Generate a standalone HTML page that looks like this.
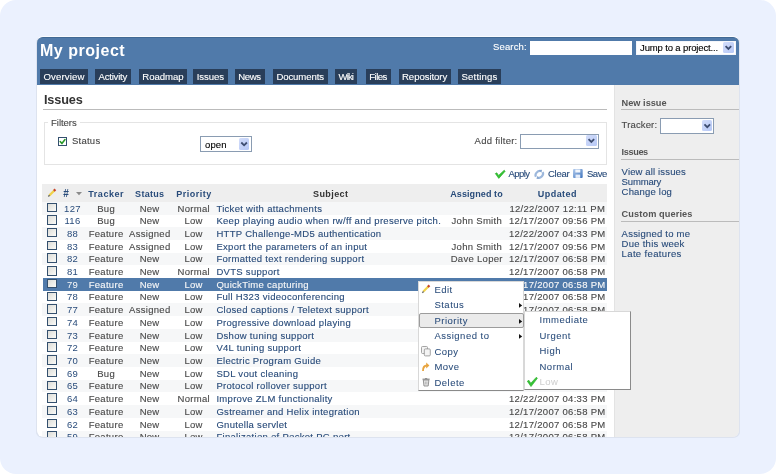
<!DOCTYPE html>
<html><head><meta charset="utf-8"><style>
html,body{margin:0;padding:0;width:776px;height:474px;overflow:hidden;background:#fff;font-family:"Liberation Sans", sans-serif;}
#root{position:absolute;left:0;top:0;width:776px;height:474px;will-change:transform}
#root .n{-webkit-text-stroke:0.12px}
</style></head><body>
<div id="root">
<div style="position:absolute;left:0;top:0;width:776px;height:474px;background:#ebf1fe;border-radius:16px"></div>
<div style="position:absolute;left:36px;top:36px;width:704px;height:402px;box-sizing:border-box;border:1px solid #dde3ef;border-top-color:#fafcff;border-radius:7px"></div>
<div style="position:absolute;left:37px;top:37px;width:702px;height:400px;background:#fff;border-radius:6px;overflow:hidden"></div>
<div style="position:absolute;left:614px;top:85px;width:125px;height:352px;background:#eeeeee;border-left:1px solid #e3e3e3;box-sizing:border-box;border-bottom-right-radius:6px"></div>
<div style="position:absolute;left:37px;top:37px;width:702px;height:48px;background:#507aaa;border-top:1px solid #416994;box-sizing:border-box;border-radius:6px 6px 0 0"></div>
<div style="position:absolute;left:40.00px;top:42.00px;white-space:pre;font-size:16px;line-height:17px;font-weight:bold;color:#fff;letter-spacing:0.512px;">My project</div>
<div class="n" style="position:absolute;left:493.00px;top:41.00px;white-space:pre;font-size:9.5px;line-height:11px;font-weight:normal;color:#fff;letter-spacing:0.150px;">Search:</div>
<div style="position:absolute;left:530px;top:41px;width:102px;height:14px;background:#fff"></div>
<div style="position:absolute;left:636px;top:40.8px;width:99.8px;height:14.2px;background:#fff;box-sizing:border-box;border:1px solid #f4f6fa"></div>
<div class="n" style="position:absolute;left:640.10px;top:42.00px;white-space:pre;font-size:9.5px;line-height:11px;font-weight:normal;color:#000;letter-spacing:-0.145px;">Jump to a project...</div>
<div style="position:absolute;left:40px;top:69.2px;width:48px;height:15.3px;background:#293e5a"></div>
<div class="n" style="position:absolute;left:43.50px;top:71.00px;white-space:pre;font-size:9.6px;line-height:11px;font-weight:normal;color:#fff;letter-spacing:0.135px;">Overview</div>
<div style="position:absolute;left:95px;top:69.2px;width:36px;height:15.3px;background:#293e5a"></div>
<div class="n" style="position:absolute;left:98.50px;top:71.00px;white-space:pre;font-size:9.6px;line-height:11px;font-weight:normal;color:#fff;letter-spacing:-0.227px;">Activity</div>
<div style="position:absolute;left:138.8px;top:69.2px;width:48.0px;height:15.3px;background:#293e5a"></div>
<div class="n" style="position:absolute;left:142.30px;top:71.00px;white-space:pre;font-size:9.6px;line-height:11px;font-weight:normal;color:#fff;letter-spacing:-0.044px;">Roadmap</div>
<div style="position:absolute;left:193.2px;top:69.2px;width:34.5px;height:15.3px;background:#293e5a"></div>
<div class="n" style="position:absolute;left:196.70px;top:71.00px;white-space:pre;font-size:9.6px;line-height:11px;font-weight:normal;color:#fff;letter-spacing:-0.086px;">Issues</div>
<div style="position:absolute;left:234.8px;top:69.2px;width:29.899999999999977px;height:15.3px;background:#293e5a"></div>
<div class="n" style="position:absolute;left:238.30px;top:71.00px;white-space:pre;font-size:9.6px;line-height:11px;font-weight:normal;color:#fff;letter-spacing:-0.431px;">News</div>
<div style="position:absolute;left:272.9px;top:69.2px;width:54.80000000000001px;height:15.3px;background:#293e5a"></div>
<div class="n" style="position:absolute;left:276.40px;top:71.00px;white-space:pre;font-size:9.6px;line-height:11px;font-weight:normal;color:#fff;letter-spacing:-0.116px;">Documents</div>
<div style="position:absolute;left:335px;top:69.2px;width:22.30000000000001px;height:15.3px;background:#293e5a"></div>
<div class="n" style="position:absolute;left:338.50px;top:71.00px;white-space:pre;font-size:9.6px;line-height:11px;font-weight:normal;color:#fff;letter-spacing:-0.894px;">Wiki</div>
<div style="position:absolute;left:365.7px;top:69.2px;width:25.400000000000034px;height:15.3px;background:#293e5a"></div>
<div class="n" style="position:absolute;left:369.20px;top:71.00px;white-space:pre;font-size:9.6px;line-height:11px;font-weight:normal;color:#fff;letter-spacing:-0.515px;">Files</div>
<div style="position:absolute;left:398.5px;top:69.2px;width:52.5px;height:15.3px;background:#293e5a"></div>
<div class="n" style="position:absolute;left:402.00px;top:71.00px;white-space:pre;font-size:9.6px;line-height:11px;font-weight:normal;color:#fff;letter-spacing:-0.062px;">Repository</div>
<div style="position:absolute;left:458px;top:69.2px;width:43px;height:15.3px;background:#293e5a"></div>
<div class="n" style="position:absolute;left:461.50px;top:71.00px;white-space:pre;font-size:9.6px;line-height:11px;font-weight:normal;color:#fff;letter-spacing:0.162px;">Settings</div>
<div style="position:absolute;left:43.90px;top:93.00px;white-space:pre;font-size:12.7px;line-height:14px;font-weight:bold;color:#333;letter-spacing:-0.129px;">Issues</div>
<div style="position:absolute;left:43px;top:109px;width:564px;height:1px;background:#bbb"></div>
<div style="position:absolute;left:43.5px;top:121.5px;width:563.5px;height:43px;box-sizing:border-box;border:1px solid #e4e4e4"></div>
<div style="position:absolute;left:48px;top:116px;width:32px;height:10px;background:#fff"></div>
<div class="n" style="position:absolute;left:51.00px;top:117.00px;white-space:pre;font-size:9.5px;line-height:11px;font-weight:normal;color:#484848;letter-spacing:-0.018px;">Filters</div>
<div style="position:absolute;left:58px;top:137px;width:9px;height:9px;box-sizing:border-box;border:1px solid #34506e;background:#fff"></div>
<div class="n" style="position:absolute;left:72.00px;top:135.00px;white-space:pre;font-size:9.5px;line-height:11px;font-weight:normal;color:#484848;letter-spacing:0.244px;">Status</div>
<div style="position:absolute;left:200.3px;top:136.1px;width:51.3px;height:15.5px;background:#fff;box-sizing:border-box;border:1px solid #8a9cb2"></div>
<div class="n" style="position:absolute;left:205.00px;top:139.00px;white-space:pre;font-size:9.5px;line-height:11px;font-weight:normal;color:#000;letter-spacing:0.150px;">open</div>
<div class="n" style="position:absolute;left:474.60px;top:135.00px;white-space:pre;font-size:9.5px;line-height:11px;font-weight:normal;color:#484848;letter-spacing:0.251px;">Add filter:</div>
<div style="position:absolute;left:520px;top:133.7px;width:79px;height:15px;background:#fff;box-sizing:border-box;border:1px solid #8a9cb2"></div>
<div class="n" style="position:absolute;left:508.40px;top:168.00px;white-space:pre;font-size:9.5px;line-height:11px;font-weight:normal;color:#284b7a;letter-spacing:-0.528px;">Apply</div>
<div class="n" style="position:absolute;left:548.00px;top:168.00px;white-space:pre;font-size:9.5px;line-height:11px;font-weight:normal;color:#284b7a;letter-spacing:-0.260px;">Clear</div>
<div class="n" style="position:absolute;left:587.00px;top:168.00px;white-space:pre;font-size:9.5px;line-height:11px;font-weight:normal;color:#284b7a;letter-spacing:-0.490px;">Save</div>
<div style="position:absolute;left:42px;top:184.1px;width:564.9px;height:17.5px;background:#eeeeee"></div>
<div style="position:absolute;left:63.30px;top:188.00px;white-space:pre;font-size:10px;line-height:11px;font-weight:bold;color:#284b7a;letter-spacing:0.000px;">#</div>
<div style="position:absolute;left:88.30px;top:189.00px;white-space:pre;font-size:9px;line-height:10px;font-weight:bold;color:#284b7a;letter-spacing:0.529px;">Tracker</div>
<div style="position:absolute;left:135.10px;top:189.00px;white-space:pre;font-size:9px;line-height:10px;font-weight:bold;color:#284b7a;letter-spacing:0.300px;">Status</div>
<div style="position:absolute;left:176.20px;top:189.00px;white-space:pre;font-size:9px;line-height:10px;font-weight:bold;color:#284b7a;letter-spacing:0.500px;">Priority</div>
<div style="position:absolute;left:313.00px;top:189.00px;white-space:pre;font-size:9px;line-height:10px;font-weight:bold;color:#333;letter-spacing:0.415px;">Subject</div>
<div style="position:absolute;left:450.20px;top:189.00px;white-space:pre;font-size:9px;line-height:10px;font-weight:bold;color:#284b7a;letter-spacing:0.099px;">Assigned to</div>
<div style="position:absolute;left:537.80px;top:189.00px;white-space:pre;font-size:9px;line-height:10px;font-weight:bold;color:#284b7a;letter-spacing:0.450px;">Updated</div>
<div style="position:absolute;left:42px;top:201.8px;width:564.9px;height:12.71px;background:#f6f7f8"></div>
<div style="position:absolute;left:47px;top:202.60000000000002px;width:9.8px;height:9.4px;box-sizing:border-box;border:1px solid #34506e;background:linear-gradient(135deg,#dcdcd7,#fbfbf8)"></div>
<div class="n" style="position:absolute;left:64.12px;top:203.00px;white-space:pre;font-size:9.5px;line-height:11px;font-weight:normal;color:#284b7a;letter-spacing:0.300px;-webkit-text-stroke:0">127</div>
<div class="n" style="position:absolute;left:97.19px;top:203.00px;white-space:pre;font-size:9.5px;line-height:11px;font-weight:normal;color:#484848;letter-spacing:0.300px;">Bug</div>
<div class="n" style="position:absolute;left:139.63px;top:203.00px;white-space:pre;font-size:9.5px;line-height:11px;font-weight:normal;color:#484848;letter-spacing:0.300px;">New</div>
<div class="n" style="position:absolute;left:177.50px;top:203.00px;white-space:pre;font-size:9.5px;line-height:11px;font-weight:normal;color:#484848;letter-spacing:0.300px;">Normal</div>
<div class="n" style="position:absolute;left:216.40px;top:203.00px;white-space:pre;font-size:9.5px;line-height:11px;font-weight:normal;color:#284b7a;letter-spacing:0.300px;">Ticket with attachments</div>
<div class="n" style="position:absolute;left:509.39px;top:203.00px;white-space:pre;font-size:9.5px;line-height:11px;font-weight:normal;color:#484848;letter-spacing:0.300px;">12/22/2007 12:11 PM</div>
<div style="position:absolute;left:42px;top:214.51000000000002px;width:564.9px;height:12.71px;background:#fff"></div>
<div style="position:absolute;left:47px;top:215.31000000000003px;width:9.8px;height:9.4px;box-sizing:border-box;border:1px solid #34506e;background:linear-gradient(135deg,#dcdcd7,#fbfbf8)"></div>
<div class="n" style="position:absolute;left:64.47px;top:215.00px;white-space:pre;font-size:9.5px;line-height:11px;font-weight:normal;color:#284b7a;letter-spacing:0.300px;-webkit-text-stroke:0">116</div>
<div class="n" style="position:absolute;left:97.19px;top:215.00px;white-space:pre;font-size:9.5px;line-height:11px;font-weight:normal;color:#484848;letter-spacing:0.300px;">Bug</div>
<div class="n" style="position:absolute;left:139.63px;top:215.00px;white-space:pre;font-size:9.5px;line-height:11px;font-weight:normal;color:#484848;letter-spacing:0.300px;">New</div>
<div class="n" style="position:absolute;left:184.42px;top:215.00px;white-space:pre;font-size:9.5px;line-height:11px;font-weight:normal;color:#484848;letter-spacing:0.300px;">Low</div>
<div class="n" style="position:absolute;left:216.40px;top:215.00px;white-space:pre;font-size:9.5px;line-height:11px;font-weight:normal;color:#284b7a;letter-spacing:0.300px;">Keep playing audio when rw/ff and preserve pitch.</div>
<div class="n" style="position:absolute;left:451.53px;top:215.00px;white-space:pre;font-size:9.5px;line-height:11px;font-weight:normal;color:#484848;letter-spacing:0.300px;">John Smith</div>
<div class="n" style="position:absolute;left:509.03px;top:215.00px;white-space:pre;font-size:9.5px;line-height:11px;font-weight:normal;color:#484848;letter-spacing:0.300px;">12/17/2007 09:56 PM</div>
<div style="position:absolute;left:42px;top:227.22000000000003px;width:564.9px;height:12.71px;background:#f6f7f8"></div>
<div style="position:absolute;left:47px;top:228.02000000000004px;width:9.8px;height:9.4px;box-sizing:border-box;border:1px solid #34506e;background:linear-gradient(135deg,#dcdcd7,#fbfbf8)"></div>
<div class="n" style="position:absolute;left:66.91px;top:228.00px;white-space:pre;font-size:9.5px;line-height:11px;font-weight:normal;color:#284b7a;letter-spacing:0.300px;-webkit-text-stroke:0">88</div>
<div class="n" style="position:absolute;left:88.67px;top:228.00px;white-space:pre;font-size:9.5px;line-height:11px;font-weight:normal;color:#484848;letter-spacing:0.300px;">Feature</div>
<div class="n" style="position:absolute;left:129.05px;top:228.00px;white-space:pre;font-size:9.5px;line-height:11px;font-weight:normal;color:#484848;letter-spacing:0.300px;">Assigned</div>
<div class="n" style="position:absolute;left:184.42px;top:228.00px;white-space:pre;font-size:9.5px;line-height:11px;font-weight:normal;color:#484848;letter-spacing:0.300px;">Low</div>
<div class="n" style="position:absolute;left:216.40px;top:228.00px;white-space:pre;font-size:9.5px;line-height:11px;font-weight:normal;color:#284b7a;letter-spacing:0.300px;">HTTP Challenge-MD5 authentication</div>
<div class="n" style="position:absolute;left:509.03px;top:228.00px;white-space:pre;font-size:9.5px;line-height:11px;font-weight:normal;color:#484848;letter-spacing:0.300px;">12/22/2007 04:33 PM</div>
<div style="position:absolute;left:42px;top:239.93px;width:564.9px;height:12.71px;background:#fff"></div>
<div style="position:absolute;left:47px;top:240.73000000000002px;width:9.8px;height:9.4px;box-sizing:border-box;border:1px solid #34506e;background:linear-gradient(135deg,#dcdcd7,#fbfbf8)"></div>
<div class="n" style="position:absolute;left:66.91px;top:241.00px;white-space:pre;font-size:9.5px;line-height:11px;font-weight:normal;color:#284b7a;letter-spacing:0.300px;-webkit-text-stroke:0">83</div>
<div class="n" style="position:absolute;left:88.67px;top:241.00px;white-space:pre;font-size:9.5px;line-height:11px;font-weight:normal;color:#484848;letter-spacing:0.300px;">Feature</div>
<div class="n" style="position:absolute;left:129.05px;top:241.00px;white-space:pre;font-size:9.5px;line-height:11px;font-weight:normal;color:#484848;letter-spacing:0.300px;">Assigned</div>
<div class="n" style="position:absolute;left:184.42px;top:241.00px;white-space:pre;font-size:9.5px;line-height:11px;font-weight:normal;color:#484848;letter-spacing:0.300px;">Low</div>
<div class="n" style="position:absolute;left:216.40px;top:241.00px;white-space:pre;font-size:9.5px;line-height:11px;font-weight:normal;color:#284b7a;letter-spacing:0.300px;">Export the parameters of an input</div>
<div class="n" style="position:absolute;left:451.53px;top:241.00px;white-space:pre;font-size:9.5px;line-height:11px;font-weight:normal;color:#484848;letter-spacing:0.300px;">John Smith</div>
<div class="n" style="position:absolute;left:509.03px;top:241.00px;white-space:pre;font-size:9.5px;line-height:11px;font-weight:normal;color:#484848;letter-spacing:0.300px;">12/17/2007 09:56 PM</div>
<div style="position:absolute;left:42px;top:252.64000000000001px;width:564.9px;height:12.71px;background:#f6f7f8"></div>
<div style="position:absolute;left:47px;top:253.44000000000003px;width:9.8px;height:9.4px;box-sizing:border-box;border:1px solid #34506e;background:linear-gradient(135deg,#dcdcd7,#fbfbf8)"></div>
<div class="n" style="position:absolute;left:66.91px;top:253.00px;white-space:pre;font-size:9.5px;line-height:11px;font-weight:normal;color:#284b7a;letter-spacing:0.300px;-webkit-text-stroke:0">82</div>
<div class="n" style="position:absolute;left:88.67px;top:253.00px;white-space:pre;font-size:9.5px;line-height:11px;font-weight:normal;color:#484848;letter-spacing:0.300px;">Feature</div>
<div class="n" style="position:absolute;left:139.63px;top:253.00px;white-space:pre;font-size:9.5px;line-height:11px;font-weight:normal;color:#484848;letter-spacing:0.300px;">New</div>
<div class="n" style="position:absolute;left:184.42px;top:253.00px;white-space:pre;font-size:9.5px;line-height:11px;font-weight:normal;color:#484848;letter-spacing:0.300px;">Low</div>
<div class="n" style="position:absolute;left:216.40px;top:253.00px;white-space:pre;font-size:9.5px;line-height:11px;font-weight:normal;color:#284b7a;letter-spacing:0.300px;">Formatted text rendering support</div>
<div class="n" style="position:absolute;left:450.67px;top:253.00px;white-space:pre;font-size:9.5px;line-height:11px;font-weight:normal;color:#484848;letter-spacing:0.300px;">Dave Loper</div>
<div class="n" style="position:absolute;left:509.03px;top:253.00px;white-space:pre;font-size:9.5px;line-height:11px;font-weight:normal;color:#484848;letter-spacing:0.300px;">12/17/2007 06:58 PM</div>
<div style="position:absolute;left:42px;top:265.35px;width:564.9px;height:12.71px;background:#fff"></div>
<div style="position:absolute;left:47px;top:266.15000000000003px;width:9.8px;height:9.4px;box-sizing:border-box;border:1px solid #34506e;background:linear-gradient(135deg,#dcdcd7,#fbfbf8)"></div>
<div class="n" style="position:absolute;left:66.91px;top:266.00px;white-space:pre;font-size:9.5px;line-height:11px;font-weight:normal;color:#284b7a;letter-spacing:0.300px;-webkit-text-stroke:0">81</div>
<div class="n" style="position:absolute;left:88.67px;top:266.00px;white-space:pre;font-size:9.5px;line-height:11px;font-weight:normal;color:#484848;letter-spacing:0.300px;">Feature</div>
<div class="n" style="position:absolute;left:139.63px;top:266.00px;white-space:pre;font-size:9.5px;line-height:11px;font-weight:normal;color:#484848;letter-spacing:0.300px;">New</div>
<div class="n" style="position:absolute;left:177.50px;top:266.00px;white-space:pre;font-size:9.5px;line-height:11px;font-weight:normal;color:#484848;letter-spacing:0.300px;">Normal</div>
<div class="n" style="position:absolute;left:216.40px;top:266.00px;white-space:pre;font-size:9.5px;line-height:11px;font-weight:normal;color:#284b7a;letter-spacing:0.300px;">DVTS support</div>
<div class="n" style="position:absolute;left:509.03px;top:266.00px;white-space:pre;font-size:9.5px;line-height:11px;font-weight:normal;color:#484848;letter-spacing:0.300px;">12/17/2007 06:58 PM</div>
<div style="position:absolute;left:43px;top:278.06px;width:563.9px;height:12.71px;background:#507aaa"></div>
<div style="position:absolute;left:47px;top:278.86px;width:9.8px;height:9.4px;box-sizing:border-box;border:1px solid #34506e;background:linear-gradient(135deg,#dcdcd7,#fbfbf8)"></div>
<div class="n" style="position:absolute;left:66.91px;top:279.00px;white-space:pre;font-size:9.5px;line-height:11px;font-weight:normal;color:#f8f8f8;letter-spacing:0.300px;-webkit-text-stroke:0">79</div>
<div class="n" style="position:absolute;left:88.67px;top:279.00px;white-space:pre;font-size:9.5px;line-height:11px;font-weight:normal;color:#f8f8f8;letter-spacing:0.300px;">Feature</div>
<div class="n" style="position:absolute;left:139.63px;top:279.00px;white-space:pre;font-size:9.5px;line-height:11px;font-weight:normal;color:#f8f8f8;letter-spacing:0.300px;">New</div>
<div class="n" style="position:absolute;left:184.42px;top:279.00px;white-space:pre;font-size:9.5px;line-height:11px;font-weight:normal;color:#f8f8f8;letter-spacing:0.300px;">Low</div>
<div class="n" style="position:absolute;left:216.40px;top:279.00px;white-space:pre;font-size:9.5px;line-height:11px;font-weight:normal;color:#f8f8f8;letter-spacing:0.300px;">QuickTime capturing</div>
<div class="n" style="position:absolute;left:509.03px;top:279.00px;white-space:pre;font-size:9.5px;line-height:11px;font-weight:normal;color:#f8f8f8;letter-spacing:0.300px;">12/17/2007 06:58 PM</div>
<div style="position:absolute;left:42px;top:290.77px;width:564.9px;height:12.71px;background:#fff"></div>
<div style="position:absolute;left:47px;top:291.57px;width:9.8px;height:9.4px;box-sizing:border-box;border:1px solid #34506e;background:linear-gradient(135deg,#dcdcd7,#fbfbf8)"></div>
<div class="n" style="position:absolute;left:66.91px;top:291.00px;white-space:pre;font-size:9.5px;line-height:11px;font-weight:normal;color:#284b7a;letter-spacing:0.300px;-webkit-text-stroke:0">78</div>
<div class="n" style="position:absolute;left:88.67px;top:291.00px;white-space:pre;font-size:9.5px;line-height:11px;font-weight:normal;color:#484848;letter-spacing:0.300px;">Feature</div>
<div class="n" style="position:absolute;left:139.63px;top:291.00px;white-space:pre;font-size:9.5px;line-height:11px;font-weight:normal;color:#484848;letter-spacing:0.300px;">New</div>
<div class="n" style="position:absolute;left:184.42px;top:291.00px;white-space:pre;font-size:9.5px;line-height:11px;font-weight:normal;color:#484848;letter-spacing:0.300px;">Low</div>
<div class="n" style="position:absolute;left:216.40px;top:291.00px;white-space:pre;font-size:9.5px;line-height:11px;font-weight:normal;color:#284b7a;letter-spacing:0.300px;">Full H323 videoconferencing</div>
<div class="n" style="position:absolute;left:509.03px;top:291.00px;white-space:pre;font-size:9.5px;line-height:11px;font-weight:normal;color:#484848;letter-spacing:0.300px;">12/17/2007 06:58 PM</div>
<div style="position:absolute;left:42px;top:303.48px;width:564.9px;height:12.71px;background:#f6f7f8"></div>
<div style="position:absolute;left:47px;top:304.28000000000003px;width:9.8px;height:9.4px;box-sizing:border-box;border:1px solid #34506e;background:linear-gradient(135deg,#dcdcd7,#fbfbf8)"></div>
<div class="n" style="position:absolute;left:66.91px;top:304.00px;white-space:pre;font-size:9.5px;line-height:11px;font-weight:normal;color:#284b7a;letter-spacing:0.300px;-webkit-text-stroke:0">77</div>
<div class="n" style="position:absolute;left:88.67px;top:304.00px;white-space:pre;font-size:9.5px;line-height:11px;font-weight:normal;color:#484848;letter-spacing:0.300px;">Feature</div>
<div class="n" style="position:absolute;left:129.05px;top:304.00px;white-space:pre;font-size:9.5px;line-height:11px;font-weight:normal;color:#484848;letter-spacing:0.300px;">Assigned</div>
<div class="n" style="position:absolute;left:184.42px;top:304.00px;white-space:pre;font-size:9.5px;line-height:11px;font-weight:normal;color:#484848;letter-spacing:0.300px;">Low</div>
<div class="n" style="position:absolute;left:216.40px;top:304.00px;white-space:pre;font-size:9.5px;line-height:11px;font-weight:normal;color:#284b7a;letter-spacing:0.300px;">Closed captions / Teletext support</div>
<div class="n" style="position:absolute;left:509.03px;top:304.00px;white-space:pre;font-size:9.5px;line-height:11px;font-weight:normal;color:#484848;letter-spacing:0.300px;">12/17/2007 06:58 PM</div>
<div style="position:absolute;left:42px;top:316.19000000000005px;width:564.9px;height:12.71px;background:#fff"></div>
<div style="position:absolute;left:47px;top:316.99000000000007px;width:9.8px;height:9.4px;box-sizing:border-box;border:1px solid #34506e;background:linear-gradient(135deg,#dcdcd7,#fbfbf8)"></div>
<div class="n" style="position:absolute;left:66.91px;top:317.00px;white-space:pre;font-size:9.5px;line-height:11px;font-weight:normal;color:#284b7a;letter-spacing:0.300px;-webkit-text-stroke:0">74</div>
<div class="n" style="position:absolute;left:88.67px;top:317.00px;white-space:pre;font-size:9.5px;line-height:11px;font-weight:normal;color:#484848;letter-spacing:0.300px;">Feature</div>
<div class="n" style="position:absolute;left:139.63px;top:317.00px;white-space:pre;font-size:9.5px;line-height:11px;font-weight:normal;color:#484848;letter-spacing:0.300px;">New</div>
<div class="n" style="position:absolute;left:184.42px;top:317.00px;white-space:pre;font-size:9.5px;line-height:11px;font-weight:normal;color:#484848;letter-spacing:0.300px;">Low</div>
<div class="n" style="position:absolute;left:216.40px;top:317.00px;white-space:pre;font-size:9.5px;line-height:11px;font-weight:normal;color:#284b7a;letter-spacing:0.300px;">Progressive download playing</div>
<div class="n" style="position:absolute;left:509.03px;top:317.00px;white-space:pre;font-size:9.5px;line-height:11px;font-weight:normal;color:#484848;letter-spacing:0.300px;">12/17/2007 06:58 PM</div>
<div style="position:absolute;left:42px;top:328.90000000000003px;width:564.9px;height:12.71px;background:#f6f7f8"></div>
<div style="position:absolute;left:47px;top:329.70000000000005px;width:9.8px;height:9.4px;box-sizing:border-box;border:1px solid #34506e;background:linear-gradient(135deg,#dcdcd7,#fbfbf8)"></div>
<div class="n" style="position:absolute;left:66.91px;top:330.00px;white-space:pre;font-size:9.5px;line-height:11px;font-weight:normal;color:#284b7a;letter-spacing:0.300px;-webkit-text-stroke:0">73</div>
<div class="n" style="position:absolute;left:88.67px;top:330.00px;white-space:pre;font-size:9.5px;line-height:11px;font-weight:normal;color:#484848;letter-spacing:0.300px;">Feature</div>
<div class="n" style="position:absolute;left:139.63px;top:330.00px;white-space:pre;font-size:9.5px;line-height:11px;font-weight:normal;color:#484848;letter-spacing:0.300px;">New</div>
<div class="n" style="position:absolute;left:184.42px;top:330.00px;white-space:pre;font-size:9.5px;line-height:11px;font-weight:normal;color:#484848;letter-spacing:0.300px;">Low</div>
<div class="n" style="position:absolute;left:216.40px;top:330.00px;white-space:pre;font-size:9.5px;line-height:11px;font-weight:normal;color:#284b7a;letter-spacing:0.300px;">Dshow tuning support</div>
<div class="n" style="position:absolute;left:509.03px;top:330.00px;white-space:pre;font-size:9.5px;line-height:11px;font-weight:normal;color:#484848;letter-spacing:0.300px;">12/17/2007 06:58 PM</div>
<div style="position:absolute;left:42px;top:341.61px;width:564.9px;height:12.71px;background:#fff"></div>
<div style="position:absolute;left:47px;top:342.41px;width:9.8px;height:9.4px;box-sizing:border-box;border:1px solid #34506e;background:linear-gradient(135deg,#dcdcd7,#fbfbf8)"></div>
<div class="n" style="position:absolute;left:66.91px;top:342.00px;white-space:pre;font-size:9.5px;line-height:11px;font-weight:normal;color:#284b7a;letter-spacing:0.300px;-webkit-text-stroke:0">72</div>
<div class="n" style="position:absolute;left:88.67px;top:342.00px;white-space:pre;font-size:9.5px;line-height:11px;font-weight:normal;color:#484848;letter-spacing:0.300px;">Feature</div>
<div class="n" style="position:absolute;left:139.63px;top:342.00px;white-space:pre;font-size:9.5px;line-height:11px;font-weight:normal;color:#484848;letter-spacing:0.300px;">New</div>
<div class="n" style="position:absolute;left:184.42px;top:342.00px;white-space:pre;font-size:9.5px;line-height:11px;font-weight:normal;color:#484848;letter-spacing:0.300px;">Low</div>
<div class="n" style="position:absolute;left:216.40px;top:342.00px;white-space:pre;font-size:9.5px;line-height:11px;font-weight:normal;color:#284b7a;letter-spacing:0.300px;">V4L tuning support</div>
<div class="n" style="position:absolute;left:509.03px;top:342.00px;white-space:pre;font-size:9.5px;line-height:11px;font-weight:normal;color:#484848;letter-spacing:0.300px;">12/17/2007 06:58 PM</div>
<div style="position:absolute;left:42px;top:354.32000000000005px;width:564.9px;height:12.71px;background:#f6f7f8"></div>
<div style="position:absolute;left:47px;top:355.12000000000006px;width:9.8px;height:9.4px;box-sizing:border-box;border:1px solid #34506e;background:linear-gradient(135deg,#dcdcd7,#fbfbf8)"></div>
<div class="n" style="position:absolute;left:66.91px;top:355.00px;white-space:pre;font-size:9.5px;line-height:11px;font-weight:normal;color:#284b7a;letter-spacing:0.300px;-webkit-text-stroke:0">70</div>
<div class="n" style="position:absolute;left:88.67px;top:355.00px;white-space:pre;font-size:9.5px;line-height:11px;font-weight:normal;color:#484848;letter-spacing:0.300px;">Feature</div>
<div class="n" style="position:absolute;left:139.63px;top:355.00px;white-space:pre;font-size:9.5px;line-height:11px;font-weight:normal;color:#484848;letter-spacing:0.300px;">New</div>
<div class="n" style="position:absolute;left:184.42px;top:355.00px;white-space:pre;font-size:9.5px;line-height:11px;font-weight:normal;color:#484848;letter-spacing:0.300px;">Low</div>
<div class="n" style="position:absolute;left:216.40px;top:355.00px;white-space:pre;font-size:9.5px;line-height:11px;font-weight:normal;color:#284b7a;letter-spacing:0.300px;">Electric Program Guide</div>
<div class="n" style="position:absolute;left:509.03px;top:355.00px;white-space:pre;font-size:9.5px;line-height:11px;font-weight:normal;color:#484848;letter-spacing:0.300px;">12/17/2007 06:58 PM</div>
<div style="position:absolute;left:42px;top:367.03000000000003px;width:564.9px;height:12.71px;background:#fff"></div>
<div style="position:absolute;left:47px;top:367.83000000000004px;width:9.8px;height:9.4px;box-sizing:border-box;border:1px solid #34506e;background:linear-gradient(135deg,#dcdcd7,#fbfbf8)"></div>
<div class="n" style="position:absolute;left:66.91px;top:368.00px;white-space:pre;font-size:9.5px;line-height:11px;font-weight:normal;color:#284b7a;letter-spacing:0.300px;-webkit-text-stroke:0">69</div>
<div class="n" style="position:absolute;left:97.19px;top:368.00px;white-space:pre;font-size:9.5px;line-height:11px;font-weight:normal;color:#484848;letter-spacing:0.300px;">Bug</div>
<div class="n" style="position:absolute;left:139.63px;top:368.00px;white-space:pre;font-size:9.5px;line-height:11px;font-weight:normal;color:#484848;letter-spacing:0.300px;">New</div>
<div class="n" style="position:absolute;left:184.42px;top:368.00px;white-space:pre;font-size:9.5px;line-height:11px;font-weight:normal;color:#484848;letter-spacing:0.300px;">Low</div>
<div class="n" style="position:absolute;left:216.40px;top:368.00px;white-space:pre;font-size:9.5px;line-height:11px;font-weight:normal;color:#284b7a;letter-spacing:0.300px;">SDL vout cleaning</div>
<div class="n" style="position:absolute;left:509.03px;top:368.00px;white-space:pre;font-size:9.5px;line-height:11px;font-weight:normal;color:#484848;letter-spacing:0.300px;">12/17/2007 06:58 PM</div>
<div style="position:absolute;left:42px;top:379.74px;width:564.9px;height:12.71px;background:#f6f7f8"></div>
<div style="position:absolute;left:47px;top:380.54px;width:9.8px;height:9.4px;box-sizing:border-box;border:1px solid #34506e;background:linear-gradient(135deg,#dcdcd7,#fbfbf8)"></div>
<div class="n" style="position:absolute;left:66.91px;top:380.00px;white-space:pre;font-size:9.5px;line-height:11px;font-weight:normal;color:#284b7a;letter-spacing:0.300px;-webkit-text-stroke:0">65</div>
<div class="n" style="position:absolute;left:88.67px;top:380.00px;white-space:pre;font-size:9.5px;line-height:11px;font-weight:normal;color:#484848;letter-spacing:0.300px;">Feature</div>
<div class="n" style="position:absolute;left:139.63px;top:380.00px;white-space:pre;font-size:9.5px;line-height:11px;font-weight:normal;color:#484848;letter-spacing:0.300px;">New</div>
<div class="n" style="position:absolute;left:184.42px;top:380.00px;white-space:pre;font-size:9.5px;line-height:11px;font-weight:normal;color:#484848;letter-spacing:0.300px;">Low</div>
<div class="n" style="position:absolute;left:216.40px;top:380.00px;white-space:pre;font-size:9.5px;line-height:11px;font-weight:normal;color:#284b7a;letter-spacing:0.300px;">Protocol rollover support</div>
<div class="n" style="position:absolute;left:509.03px;top:380.00px;white-space:pre;font-size:9.5px;line-height:11px;font-weight:normal;color:#484848;letter-spacing:0.300px;">12/17/2007 06:58 PM</div>
<div style="position:absolute;left:42px;top:392.45000000000005px;width:564.9px;height:12.71px;background:#fff"></div>
<div style="position:absolute;left:47px;top:393.25000000000006px;width:9.8px;height:9.4px;box-sizing:border-box;border:1px solid #34506e;background:linear-gradient(135deg,#dcdcd7,#fbfbf8)"></div>
<div class="n" style="position:absolute;left:66.91px;top:393.00px;white-space:pre;font-size:9.5px;line-height:11px;font-weight:normal;color:#284b7a;letter-spacing:0.300px;-webkit-text-stroke:0">64</div>
<div class="n" style="position:absolute;left:88.67px;top:393.00px;white-space:pre;font-size:9.5px;line-height:11px;font-weight:normal;color:#484848;letter-spacing:0.300px;">Feature</div>
<div class="n" style="position:absolute;left:139.63px;top:393.00px;white-space:pre;font-size:9.5px;line-height:11px;font-weight:normal;color:#484848;letter-spacing:0.300px;">New</div>
<div class="n" style="position:absolute;left:177.50px;top:393.00px;white-space:pre;font-size:9.5px;line-height:11px;font-weight:normal;color:#484848;letter-spacing:0.300px;">Normal</div>
<div class="n" style="position:absolute;left:216.40px;top:393.00px;white-space:pre;font-size:9.5px;line-height:11px;font-weight:normal;color:#284b7a;letter-spacing:0.300px;">Improve ZLM functionality</div>
<div class="n" style="position:absolute;left:509.03px;top:393.00px;white-space:pre;font-size:9.5px;line-height:11px;font-weight:normal;color:#484848;letter-spacing:0.300px;">12/22/2007 04:33 PM</div>
<div style="position:absolute;left:42px;top:405.16px;width:564.9px;height:12.71px;background:#f6f7f8"></div>
<div style="position:absolute;left:47px;top:405.96000000000004px;width:9.8px;height:9.4px;box-sizing:border-box;border:1px solid #34506e;background:linear-gradient(135deg,#dcdcd7,#fbfbf8)"></div>
<div class="n" style="position:absolute;left:66.91px;top:406.00px;white-space:pre;font-size:9.5px;line-height:11px;font-weight:normal;color:#284b7a;letter-spacing:0.300px;-webkit-text-stroke:0">63</div>
<div class="n" style="position:absolute;left:88.67px;top:406.00px;white-space:pre;font-size:9.5px;line-height:11px;font-weight:normal;color:#484848;letter-spacing:0.300px;">Feature</div>
<div class="n" style="position:absolute;left:139.63px;top:406.00px;white-space:pre;font-size:9.5px;line-height:11px;font-weight:normal;color:#484848;letter-spacing:0.300px;">New</div>
<div class="n" style="position:absolute;left:184.42px;top:406.00px;white-space:pre;font-size:9.5px;line-height:11px;font-weight:normal;color:#484848;letter-spacing:0.300px;">Low</div>
<div class="n" style="position:absolute;left:216.40px;top:406.00px;white-space:pre;font-size:9.5px;line-height:11px;font-weight:normal;color:#284b7a;letter-spacing:0.300px;">Gstreamer and Helix integration</div>
<div class="n" style="position:absolute;left:509.03px;top:406.00px;white-space:pre;font-size:9.5px;line-height:11px;font-weight:normal;color:#484848;letter-spacing:0.300px;">12/17/2007 06:58 PM</div>
<div style="position:absolute;left:42px;top:417.87px;width:564.9px;height:12.71px;background:#fff"></div>
<div style="position:absolute;left:47px;top:418.67px;width:9.8px;height:9.4px;box-sizing:border-box;border:1px solid #34506e;background:linear-gradient(135deg,#dcdcd7,#fbfbf8)"></div>
<div class="n" style="position:absolute;left:66.91px;top:419.00px;white-space:pre;font-size:9.5px;line-height:11px;font-weight:normal;color:#284b7a;letter-spacing:0.300px;-webkit-text-stroke:0">62</div>
<div class="n" style="position:absolute;left:88.67px;top:419.00px;white-space:pre;font-size:9.5px;line-height:11px;font-weight:normal;color:#484848;letter-spacing:0.300px;">Feature</div>
<div class="n" style="position:absolute;left:139.63px;top:419.00px;white-space:pre;font-size:9.5px;line-height:11px;font-weight:normal;color:#484848;letter-spacing:0.300px;">New</div>
<div class="n" style="position:absolute;left:184.42px;top:419.00px;white-space:pre;font-size:9.5px;line-height:11px;font-weight:normal;color:#484848;letter-spacing:0.300px;">Low</div>
<div class="n" style="position:absolute;left:216.40px;top:419.00px;white-space:pre;font-size:9.5px;line-height:11px;font-weight:normal;color:#284b7a;letter-spacing:0.300px;">Gnutella servlet</div>
<div class="n" style="position:absolute;left:509.03px;top:419.00px;white-space:pre;font-size:9.5px;line-height:11px;font-weight:normal;color:#484848;letter-spacing:0.300px;">12/17/2007 06:58 PM</div>
<div style="position:absolute;left:42px;top:430.58000000000004px;width:564.9px;height:6.419999999999959px;background:#f6f7f8"></div>
<div style="position:absolute;left:47px;top:431.38000000000005px;width:9.8px;height:9.4px;box-sizing:border-box;border:1px solid #34506e;background:linear-gradient(135deg,#dcdcd7,#fbfbf8)"></div>
<div class="n" style="position:absolute;left:66.91px;top:431.00px;white-space:pre;font-size:9.5px;line-height:11px;font-weight:normal;color:#284b7a;letter-spacing:0.300px;-webkit-text-stroke:0">59</div>
<div class="n" style="position:absolute;left:88.67px;top:431.00px;white-space:pre;font-size:9.5px;line-height:11px;font-weight:normal;color:#484848;letter-spacing:0.300px;">Feature</div>
<div class="n" style="position:absolute;left:139.63px;top:431.00px;white-space:pre;font-size:9.5px;line-height:11px;font-weight:normal;color:#484848;letter-spacing:0.300px;">New</div>
<div class="n" style="position:absolute;left:184.42px;top:431.00px;white-space:pre;font-size:9.5px;line-height:11px;font-weight:normal;color:#484848;letter-spacing:0.300px;">Low</div>
<div class="n" style="position:absolute;left:216.40px;top:431.00px;white-space:pre;font-size:9.5px;line-height:11px;font-weight:normal;color:#284b7a;letter-spacing:0.300px;">Finalization of Pocket PC port</div>
<div class="n" style="position:absolute;left:509.03px;top:431.00px;white-space:pre;font-size:9.5px;line-height:11px;font-weight:normal;color:#484848;letter-spacing:0.300px;">12/17/2007 06:58 PM</div>
<div style="position:absolute;left:30px;top:437px;width:716px;height:12px;background:#ebf1fe"></div>
<div style="position:absolute;left:36px;top:425px;width:704px;height:13px;box-sizing:border-box;border:1px solid #dde3ef;border-top:none;border-radius:0 0 7px 7px"></div>
<div style="position:absolute;left:621.60px;top:98.00px;white-space:pre;font-size:9.2px;line-height:10px;font-weight:bold;color:#555;letter-spacing:0.009px;">New issue</div>
<div style="position:absolute;left:621px;top:109px;width:118px;height:1px;background:#bbb"></div>
<div class="n" style="position:absolute;left:621.60px;top:119.00px;white-space:pre;font-size:9.5px;line-height:11px;font-weight:normal;color:#484848;letter-spacing:0.137px;">Tracker:</div>
<div style="position:absolute;left:660px;top:118.2px;width:54.4px;height:15.4px;background:#fff;box-sizing:border-box;border:1px solid #8a9cb2"></div>
<div style="position:absolute;left:621.60px;top:147.00px;white-space:pre;font-size:9.2px;line-height:10px;font-weight:bold;color:#555;letter-spacing:-0.399px;">Issues</div>
<div style="position:absolute;left:621px;top:159px;width:118px;height:1px;background:#bbb"></div>
<div class="n" style="position:absolute;left:621.60px;top:166.00px;white-space:pre;font-size:9.5px;line-height:11px;font-weight:normal;color:#284b7a;letter-spacing:0.144px;">View all issues</div>
<div class="n" style="position:absolute;left:621.60px;top:176.00px;white-space:pre;font-size:9.5px;line-height:11px;font-weight:normal;color:#284b7a;letter-spacing:-0.149px;">Summary</div>
<div class="n" style="position:absolute;left:621.60px;top:186.00px;white-space:pre;font-size:9.5px;line-height:11px;font-weight:normal;color:#284b7a;letter-spacing:0.188px;">Change log</div>
<div style="position:absolute;left:621.60px;top:209.00px;white-space:pre;font-size:9.2px;line-height:10px;font-weight:bold;color:#555;letter-spacing:0.106px;">Custom queries</div>
<div style="position:absolute;left:621px;top:221.3px;width:118px;height:1px;background:#bbb"></div>
<div class="n" style="position:absolute;left:621.60px;top:228.00px;white-space:pre;font-size:9.5px;line-height:11px;font-weight:normal;color:#284b7a;letter-spacing:0.223px;">Assigned to me</div>
<div class="n" style="position:absolute;left:621.60px;top:238.00px;white-space:pre;font-size:9.5px;line-height:11px;font-weight:normal;color:#284b7a;letter-spacing:0.257px;">Due this week</div>
<div class="n" style="position:absolute;left:621.60px;top:248.00px;white-space:pre;font-size:9.5px;line-height:11px;font-weight:normal;color:#284b7a;letter-spacing:0.358px;">Late features</div>
<div style="position:absolute;left:418.2px;top:280.8px;width:106px;height:109.8px;background:#fff;box-sizing:border-box;border:1px solid #d8d8d8;border-bottom:1.2px solid #8a8a8a"></div>
<div style="position:absolute;left:419.3px;top:313.2px;width:104.5px;height:14.4px;background:#ebebeb;box-sizing:border-box;border:1px solid #9c9c9c;border-radius:2px"></div>
<div class="n" style="position:absolute;left:434.40px;top:284.00px;white-space:pre;font-size:9.5px;line-height:11px;font-weight:normal;color:#284b7a;letter-spacing:0.500px;-webkit-text-stroke:0.05px">Edit</div>
<div class="n" style="position:absolute;left:434.40px;top:299.00px;white-space:pre;font-size:9.5px;line-height:11px;font-weight:normal;color:#284b7a;letter-spacing:0.500px;-webkit-text-stroke:0.05px">Status</div>
<div class="n" style="position:absolute;left:434.40px;top:315.00px;white-space:pre;font-size:9.5px;line-height:11px;font-weight:normal;color:#284b7a;letter-spacing:0.500px;-webkit-text-stroke:0.05px">Priority</div>
<div class="n" style="position:absolute;left:434.40px;top:330.00px;white-space:pre;font-size:9.5px;line-height:11px;font-weight:normal;color:#284b7a;letter-spacing:0.500px;-webkit-text-stroke:0.05px">Assigned to</div>
<div class="n" style="position:absolute;left:434.40px;top:346.00px;white-space:pre;font-size:9.5px;line-height:11px;font-weight:normal;color:#284b7a;letter-spacing:0.500px;-webkit-text-stroke:0.05px">Copy</div>
<div class="n" style="position:absolute;left:434.40px;top:361.00px;white-space:pre;font-size:9.5px;line-height:11px;font-weight:normal;color:#284b7a;letter-spacing:0.500px;-webkit-text-stroke:0.05px">Move</div>
<div class="n" style="position:absolute;left:434.40px;top:377.00px;white-space:pre;font-size:9.5px;line-height:11px;font-weight:normal;color:#284b7a;letter-spacing:0.500px;-webkit-text-stroke:0.05px">Delete</div>
<div style="position:absolute;left:523.5px;top:311.2px;width:107.7px;height:79.1px;background:#fff;box-sizing:border-box;border:1px solid #d8d8d8;border-right-color:#8a8a8a;border-bottom:1.2px solid #8a8a8a"></div>
<div class="n" style="position:absolute;left:539.50px;top:314.00px;white-space:pre;font-size:9.5px;line-height:11px;font-weight:normal;color:#284b7a;letter-spacing:0.500px;-webkit-text-stroke:0.05px">Immediate</div>
<div class="n" style="position:absolute;left:539.50px;top:330.00px;white-space:pre;font-size:9.5px;line-height:11px;font-weight:normal;color:#284b7a;letter-spacing:0.500px;-webkit-text-stroke:0.05px">Urgent</div>
<div class="n" style="position:absolute;left:539.50px;top:345.00px;white-space:pre;font-size:9.5px;line-height:11px;font-weight:normal;color:#284b7a;letter-spacing:0.500px;-webkit-text-stroke:0.05px">High</div>
<div class="n" style="position:absolute;left:539.50px;top:361.00px;white-space:pre;font-size:9.5px;line-height:11px;font-weight:normal;color:#284b7a;letter-spacing:0.500px;-webkit-text-stroke:0.05px">Normal</div>
<div class="n" style="position:absolute;left:539.50px;top:376.00px;white-space:pre;font-size:9.5px;line-height:11px;font-weight:normal;color:#d0d0d0;letter-spacing:0.500px;-webkit-text-stroke:0.05px">Low</div>
<div style="position:absolute;left:722.9px;top:42.1px;width:10.8px;height:11.1px;background:linear-gradient(135deg,#d3ddfa,#b6c8f6);border-radius:1.5px"></div>
<svg style="position:absolute;left:722.9px;top:42.1px;overflow:visible" width="10.8" height="11.1" viewBox="0 0 10.8 11.1"><path d="M2.6000000000000005 4.15 L5.4 6.949999999999999 L8.2 4.15" fill="none" stroke="#3d4d70" stroke-width="1.8"/></svg>
<div style="position:absolute;left:238.8px;top:137.9px;width:10.2px;height:11.8px;background:linear-gradient(135deg,#d3ddfa,#b6c8f6);border-radius:1.5px"></div>
<svg style="position:absolute;left:238.8px;top:137.9px;overflow:visible" width="10.2" height="11.8" viewBox="0 0 10.2 11.8"><path d="M2.3 4.5 L5.1 7.300000000000001 L7.8999999999999995 4.5" fill="none" stroke="#3d4d70" stroke-width="1.8"/></svg>
<div style="position:absolute;left:586px;top:135.3px;width:10.7px;height:11.2px;background:linear-gradient(135deg,#d3ddfa,#b6c8f6);border-radius:1.5px"></div>
<svg style="position:absolute;left:586px;top:135.3px;overflow:visible" width="10.7" height="11.2" viewBox="0 0 10.7 11.2"><path d="M2.55 4.199999999999999 L5.35 7.0 L8.149999999999999 4.199999999999999" fill="none" stroke="#3d4d70" stroke-width="1.8"/></svg>
<div style="position:absolute;left:701.8px;top:119.9px;width:10.5px;height:11.6px;background:linear-gradient(135deg,#d3ddfa,#b6c8f6);border-radius:1.5px"></div>
<svg style="position:absolute;left:701.8px;top:119.9px;overflow:visible" width="10.5" height="11.6" viewBox="0 0 10.5 11.6"><path d="M2.45 4.4 L5.25 7.199999999999999 L8.05 4.4" fill="none" stroke="#3d4d70" stroke-width="1.8"/></svg>
<svg style="position:absolute;left:58px;top:137px;overflow:visible" width="9" height="9" viewBox="0 0 9 9"><path d="M2.2 4.6 L3.9 6.6 L7 2.6" fill="none" stroke="#2a9a2a" stroke-width="1.6" stroke-linecap="round" stroke-linejoin="round"/></svg>
<svg style="position:absolute;left:494.7px;top:169.8px;overflow:visible" width="10.4" height="8.5" viewBox="0 0 10.4 8.5"><path d="M0.3 3.6 L1.8 2.8 L3.6 5.4 L9.2 0.2 L10.2 1.2 L3.8 8.4 Z" fill="#35c435" stroke="#22aa22" stroke-width="0.6"/></svg>
<svg style="position:absolute;left:534.2px;top:169.8px;overflow:visible" width="10.6" height="8.8" viewBox="0 0 10.6 8.8"><g transform="rotate(-35 5.3 4.4)"><path d="M1.2 4.4 A4.1 3.3 0 0 1 8.6 2.6" fill="none" stroke="#9db8dc" stroke-width="2.2"/><path d="M9.4 4.4 A4.1 3.3 0 0 1 2 6.2" fill="none" stroke="#9db8dc" stroke-width="2.2"/><path d="M7.2 0.6 L10.2 2.2 L8 4.3 Z" fill="#86a6d0"/><path d="M3.4 8.2 L0.4 6.6 L2.6 4.5 Z" fill="#86a6d0"/></g></svg>
<svg style="position:absolute;left:573px;top:169.4px;overflow:visible" width="9.7" height="8.9" viewBox="0 0 9.7 8.9"><defs><linearGradient id="sg" x1="0" y1="0" x2="1" y2="1"><stop offset="0" stop-color="#b4cdee"/><stop offset="1" stop-color="#3f74bd"/></linearGradient></defs><rect x="0" y="0" width="9.7" height="8.9" rx="1" fill="url(#sg)"/><rect x="2.3" y="0.5" width="5" height="3" fill="#f2f6fc"/><rect x="2.5" y="5.6" width="4.7" height="3.3" fill="#e6eefa"/></svg>
<svg style="position:absolute;left:48.3px;top:189.1px;overflow:visible" width="8.2" height="7.7" viewBox="0 0 8.2 7.7"><path d="M1.4 6.4 L6.6 1.2" stroke="#f0d24a" stroke-width="2.2"/><path d="M5.9 1.9 L7.4 0.4" stroke="#c8442c" stroke-width="2.2"/><path d="M0.3 7.5 L1.6 6.2" stroke="#6a6a5a" stroke-width="1.4"/></svg>
<svg style="position:absolute;left:75.5px;top:192px;overflow:visible" width="6" height="3.2" viewBox="0 0 6 3.2"><path d="M0 0 L6 0 L3 3.2 Z" fill="#8a8a8a"/></svg>
<svg style="position:absolute;left:519.2px;top:303.2px;overflow:visible" width="3.2" height="4.8" viewBox="0 0 3.2 4.8"><path d="M0 0 L3.2 2.4 L0 4.8 Z" fill="#111"/></svg>
<svg style="position:absolute;left:519.2px;top:318.7px;overflow:visible" width="3.2" height="4.8" viewBox="0 0 3.2 4.8"><path d="M0 0 L3.2 2.4 L0 4.8 Z" fill="#111"/></svg>
<svg style="position:absolute;left:519.2px;top:333.9px;overflow:visible" width="3.2" height="4.8" viewBox="0 0 3.2 4.8"><path d="M0 0 L3.2 2.4 L0 4.8 Z" fill="#111"/></svg>
<svg style="position:absolute;left:421.8px;top:284.8px;overflow:visible" width="8.2" height="7.9" viewBox="0 0 8.2 7.9"><path d="M1.4 6.6 L6.6 1.3" stroke="#f0d24a" stroke-width="2.2"/><path d="M5.9 2 L7.5 0.4" stroke="#c8442c" stroke-width="2.2"/><path d="M0.3 7.7 L1.6 6.4" stroke="#6a6a5a" stroke-width="1.4"/></svg>
<svg style="position:absolute;left:421px;top:346px;overflow:visible" width="9.8" height="10.4" viewBox="0 0 9.8 10.4"><rect x="0.5" y="0.5" width="6" height="7" rx="1" fill="#f4f4f4" stroke="#9a9a9a" stroke-width="0.9"/><rect x="3.3" y="2.9" width="6" height="7" rx="1" fill="#f4f4f4" stroke="#9a9a9a" stroke-width="0.9"/></svg>
<svg style="position:absolute;left:422px;top:361.9px;overflow:visible" width="7.5" height="9.3" viewBox="0 0 7.5 9.3"><path d="M1 9 C1 5 2.5 3.5 5 3.5" fill="none" stroke="#e8a540" stroke-width="1.8"/><path d="M4.2 0.6 L7.4 3.5 L4.2 6.4 Z" fill="#e8a540"/></svg>
<svg style="position:absolute;left:422px;top:377.8px;overflow:visible" width="8.2" height="8.3" viewBox="0 0 8.2 8.3"><path d="M0.5 1.2 L7.7 1.2" stroke="#8a8a8a" stroke-width="1.2"/><path d="M1.3 2 L2 8 L6.2 8 L6.9 2 Z" fill="#eaeaea" stroke="#8a8a8a" stroke-width="0.9"/><path d="M3 0.6 L5.2 0.6" stroke="#8a8a8a" stroke-width="1"/><path d="M3.3 3.5 L3.3 6.5 M4.9 3.5 L4.9 6.5" stroke="#9a9a9a" stroke-width="0.7"/></svg>
<svg style="position:absolute;left:526.5px;top:377.2px;overflow:visible" width="10.5" height="9.8" viewBox="0 0 10.5 9.8"><path d="M0.3 4.2 L1.9 3.3 L3.8 6.2 L9.4 0.2 L10.4 1.3 L4 9.6 Z" fill="#35c435" stroke="#22aa22" stroke-width="0.6"/></svg>
</div></body></html>
